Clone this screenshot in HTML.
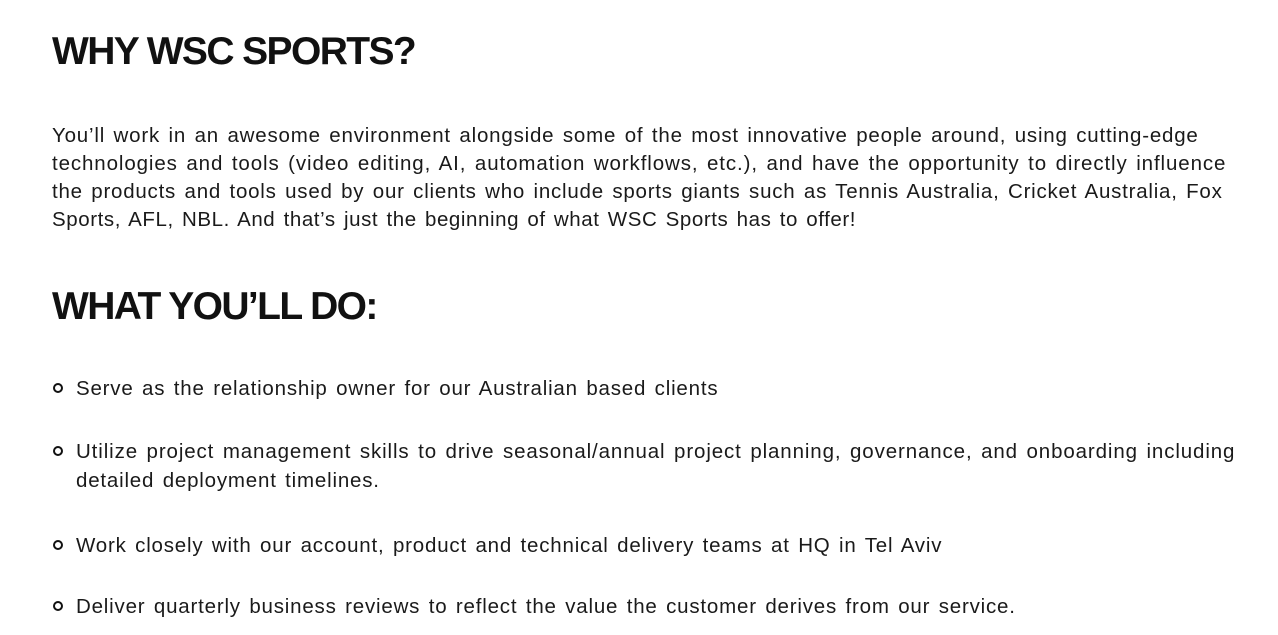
<!DOCTYPE html>
<html><head><meta charset="utf-8"><style>
body{margin:0;background:#fff;width:1278px;height:635px;overflow:hidden;position:relative;font-family:"Liberation Sans",sans-serif;color:#111;}
.h{position:absolute;left:52px;font-weight:bold;font-size:39px;letter-spacing:-1.6px;white-space:nowrap;line-height:40px;}
.l{position:absolute;left:52px;font-size:20.5px;letter-spacing:0.8px;word-spacing:2px;white-space:nowrap;line-height:28px;color:#1a1a1a;}
.b{left:76px}
.dot{position:absolute;left:53px;width:6px;height:6px;border:2px solid #111;border-radius:50%;}
</style></head><body>
<div class="h" style="top:32px">WHY WSC SPORTS?</div>
<div class="l" style="top:122px">You’ll work in an awesome environment alongside some of the most innovative people around, using cutting-edge</div>
<div class="l" style="top:150px;letter-spacing:0.89px">technologies and tools (video editing, AI, automation workflows, etc.), and have the opportunity to directly influence</div>
<div class="l" style="top:178px;letter-spacing:0.77px">the products and tools used by our clients who include sports giants such as Tennis Australia, Cricket Australia, Fox</div>
<div class="l" style="top:206px;letter-spacing:0.58px">Sports, AFL, NBL. And that’s just the beginning of what WSC Sports has to offer!</div>
<div class="h" style="top:287px">WHAT YOU’LL DO:</div>
<div class="dot" style="top:383px"></div>
<div class="l b" style="top:375px">Serve as the relationship owner for our Australian based clients</div>
<div class="dot" style="top:446px"></div>
<div class="l b" style="top:438px;letter-spacing:0.88px">Utilize project management skills to drive seasonal/annual project planning, governance, and onboarding including</div>
<div class="l b" style="top:467px">detailed deployment timelines.</div>
<div class="dot" style="top:540px"></div>
<div class="l b" style="top:532px">Work closely with our account, product and technical delivery teams at HQ in Tel Aviv</div>
<div class="dot" style="top:601px"></div>
<div class="l b" style="top:593px">Deliver quarterly business reviews to reflect the value the customer derives from our service.</div>
</body></html>
